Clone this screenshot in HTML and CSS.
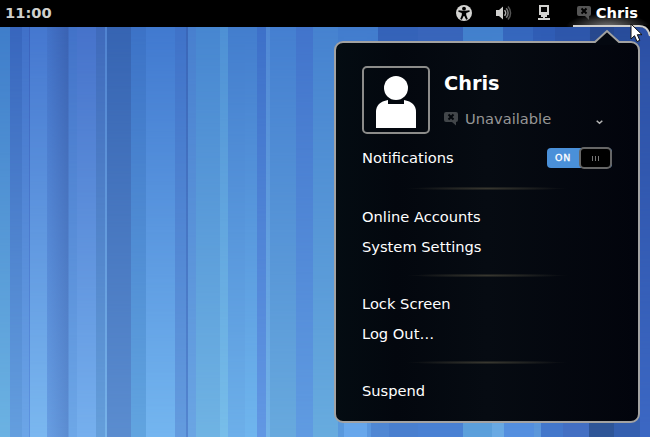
FILE: index.html
```html
<!DOCTYPE html>
<html lang="en">
<head>
<meta charset="utf-8">
<title>Desktop</title>
<link rel="stylesheet" href="styles.css">
</head>
<body>
<div class="desktop">
  <header class="panel">
    <span class="clock">11:00</span>
    <nav class="tray">
      <svg class="tray-icon" width="16" height="16" viewBox="0 0 16 16"><circle cx="8" cy="8" r="8" fill="#d4d4d2"/><circle cx="8" cy="3.700" r="1.900"/><path d="M2.600 5.200 6.500 5.800h3l3.900-.6.300 1.600-3.500 1.100v2l1.600 4.200-1.600.6L8.300 11h-.6l-1.900 3.700-1.600-.6L5.800 9.900v-2L2.300 6.800z"/></svg>
      <svg class="tray-icon" width="16" height="16" viewBox="0 0 16 16"><path d="M0 5h3l4-3.500v13L3 11H0z" fill="#d0d0ce"/><path d="M8.500 5.200a4 4 0 0 1 0 5.600" fill="none" stroke="#aaa" stroke-width="1.600"/><path d="M10.200 3.200a7 7 0 0 1 0 9.600" fill="none" stroke="#777" stroke-width="1.600"/><path d="M12 1.500a9.500 9.500 0 0 1 0 13" fill="none" stroke="#555" stroke-width="1.500"/></svg>
      <svg class="tray-icon" width="16" height="16" viewBox="0 0 16 16"><path d="M3 0h10v10H3zM5 2v5h6V2z" fill="#d2d2d0" fill-rule="evenodd"/><path d="M5 10h6v2H9v1h5v2H2v-2h5v-1H5z" fill="#d2d2d0"/></svg>
      <span class="user">
        <svg class="status" width="14" height="15" viewBox="0 0 14 15"><path fill="#555" d="M2 0h10q2 0 2 2v6q0 2-2 2v4L8 10H2Q0 10 0 8V2Q0 0 2 0z"/><path d="m4.500 2.500 5 5m0-5-5 5" stroke="#000" stroke-width="2"/></svg>
        <b>Chris</b>
      </span>
    </nav>
  </header>
  <svg class="corner" width="77" height="14" viewBox="0 0 77 14"><path d="M66 1H77V12Q75 3 66 3z"/><path d="M0 2H66Q75 2 77 12" fill="none" stroke="#cfcfcd" stroke-width="2"/></svg>

  <section class="menu">
    <svg class="arrow" width="26" height="16" viewBox="0 0 26 16"><path d="M0 14 13 2 26 14V16H0z" fill="#040810"/><path d="M0 13H1L13 2 25 13H26" fill="none" stroke="#a2a2a0" stroke-width="2"/></svg>
    <div class="profile">
      <div class="avatar"><svg width="40" height="52" viewBox="0 0 40 52"><circle cx="20" cy="12" r="12" fill="#fff"/><path d="M0 52V36Q0 26 12 24V28H28V24Q40 26 40 36V52z" fill="#fff"/></svg></div>
      <div class="identity">
        <div class="name">Chris</div>
        <div class="presence">
          <svg width="14" height="14" viewBox="0 0 14 14"><path fill="#42464a" d="M2 0h10q2 0 2 2v6q0 2-2 2v3.500L8 10H2Q0 10 0 8V2Q0 0 2 0z"/><path d="m4.500 2.500 5 5m0-5-5 5" stroke="#03070c" stroke-width="2"/></svg>
          <span>Unavailable</span>
          <svg class="chevron" width="7" height="5" viewBox="0 0 7 5"><path d="m.7.700 2.800 2.600L6.300.7" fill="none" stroke="#b5b5b5" stroke-width="1.500"/></svg>
        </div>
      </div>
    </div>
    <div class="item">Notifications
      <span class="switch"><span class="on">ON</span><span class="knob"><i></i><i></i><i></i></span></span>
    </div>
    <div class="separator first"></div>
    <div class="item">Online Accounts</div>
    <div class="item">System Settings</div>
    <div class="separator"></div>
    <div class="item">Lock Screen</div>
    <div class="item">Log Out…</div>
    <div class="separator"></div>
    <div class="item">Suspend</div>
  </section>
  <svg class="pointer" width="13" height="20" viewBox="0 0 13 20"><path d="M1 1V16L4.500 12.700 7 18.500 9.800 17.300 7.300 11.700H12z" fill="#fff" stroke="#111" stroke-width="1"/></svg>
</div>
</body>
</html>
```

FILE: styles.css
```css
body { margin: 0; }

.desktop {
  position: relative;
  width: 650px;
  height: 437px;
  overflow: hidden;
  font: 14.67px/30px "DejaVu Sans", sans-serif;
  color: #fff;
  background: linear-gradient(90deg,
    #6cb3e3 10px, #649fdf 10px 22px, #6ca6e8 22px 29px, #5e94e0 29px 30px,
    #7bb8f0 30px 47px, #689fe3 47px, #5c8dd2 68px, #6ea8e8 69px 77px,
    #76b0ee 77px 96px, #659fdb 96px 105px, #78b4ea 105px 107px,
    #5b8dd0 107px 131px, #62a5e0 131px 146px, #74b6f0 146px 175px,
    #649cdf 175px 186px, #5486d0 186px 188px, #6ba6e4 188px 196px,
    #70b4e4 196px 220px, #78beea 220px 228px, #6db0ea 228px 245px,
    #70b6ee 245px 257px, #6298e4 257px 266px, #74b4e9 266px 270px,
    #68aade 270px 296px, #609ce2 296px 313px, #68acdf 313px 338px,
    #5a9ade 338px 344px, #68a8ec 344px 367px, #5a98e0 367px 371px,
    #5088d4 371px 389px, #4a80d0 389px 418px, #4a82d4 418px 463px,
    #5ca0dc 463px 492px, #6aaae4 492px 504px, #5590e0 504px 534px,
    #5c98dc 534px 541px, #4478cc 541px 563px, #4470c4 563px 589px,
    #2f5698 589px 614px, #3560b0 614px 640px, #3c68c4 640px);
}

.desktop::before {
  content: "";
  position: absolute;
  inset: 27px 0 0;
  background: linear-gradient(90deg,
    #3f7dca 10px, #3866bd 10px 22px, #4070c8 22px 29px, #3a62bc 29px 30px,
    #4577cf 30px 47px, #4272c8 47px, #3a62b2 68px, #4272c8 69px 77px,
    #4672ca 77px 96px, #3f6abb 96px 105px, #5083d0 105px 107px,
    #3664b2 107px 131px, #3c72c6 131px 146px, #4179cf 146px 175px,
    #3f72c8 175px 186px, #3a66b8 186px 188px, #487fce 188px 196px,
    #4786d0 196px 220px, #4e90d4 220px 228px, #437dcd 228px 257px,
    #3d70c8 257px 266px, #5088d4 266px 270px, #457fd0 270px 296px,
    #4274cb 296px 313px, #4682cf 313px 338px, #427ccd 338px 378px,
    #3462b8 378px 418px, #3864ba 418px 463px, #4280cc 463px 503px,
    #3566bc 503px 533px, #2f5cb4 533px 555px, #2d56aa 555px 590px,
    #27488e 590px 614px, #284c9a 614px 640px, #2c50a4 640px);
  mask-image: linear-gradient(#000, transparent);
}

.panel {
  position: relative;
  display: flex;
  justify-content: space-between;
  box-sizing: border-box;
  height: 27px;
  padding: 0 12px 1px 5px;
  line-height: 26px;
  background: radial-gradient(ellipse 42px 14px at 608px 27px, #777, transparent) #000;
}

.clock { color: #d0d0ce; font-weight: bold; }

.tray { display: flex; align-items: center; }
.tray-icon { margin-right: 24px; }
.tray-icon:nth-child(3) { margin-right: 25px; }
.user { display: flex; align-items: center; gap: 5px; }

.corner { position: absolute; left: 573px; top: 24px; }

.menu {
  position: absolute;
  left: 334px;
  top: 41px;
  box-sizing: border-box;
  width: 306px;
  height: 382px;
  padding: 23px 26px 0;
  border: 2px solid #a2a2a2;
  border-radius: 9px;
  background: linear-gradient(90deg, #040c12, #03070e 20%, #060b12 50%, #02040c);
}

.arrow { position: absolute; left: 258px; top: -14px; }

.profile { display: flex; gap: 14px; height: 77px; }

.avatar {
  display: flex;
  justify-content: center;
  align-items: flex-end;
  box-sizing: border-box;
  width: 68px;
  height: 68px;
  padding-bottom: 4px;
  border: 2px solid #8c8c8a;
  border-radius: 5px;
}

.identity { flex: 1; }
.name { font-size: 19.300px; font-weight: bold; line-height: 36px; }
.presence { display: flex; align-items: center; gap: 7px; height: 34px; color: #969696; }
.chevron { margin: 6px 9px 0 auto; }

.item { display: flex; justify-content: space-between; align-items: center; height: 30px; }

.switch {
  display: flex;
  justify-content: space-between;
  align-items: center;
  width: 65px;
  height: 20px;
  border-radius: 4px;
  background: #4a90d9;
}

.on { padding-left: 8px; font-size: 9.500px; letter-spacing: .8px; line-height: 20px; -webkit-text-stroke: .3px #fff; }

.knob {
  display: flex;
  justify-content: center;
  align-items: center;
  gap: 2px;
  box-sizing: border-box;
  width: 33px;
  height: 22px;
  border: 2px solid #666;
  border-radius: 5px;
  background: #000;
}

.knob i { width: 1px; height: 5px; background: #777; }

.separator {
  height: 3px;
  margin: 12px 0;
  background: radial-gradient(ellipse 80px 2px at 50%, #38372f, transparent);
}

.separator.first { margin-top: 14px; }

.pointer { position: absolute; left: 630px; top: 23px; }
```
